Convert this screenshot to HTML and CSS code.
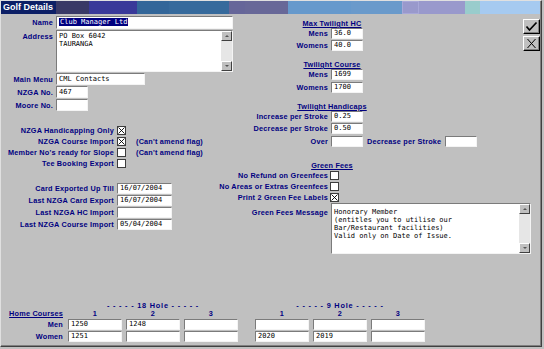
FILE: index.html
```html
<!DOCTYPE html>
<html lang="en">
<head>
    <meta charset="UTF-8">
    <meta name="viewport" content="width=device-width, initial-scale=1.0">
    <title>Golf Details</title>
    <link rel="stylesheet" href="styles.css">
</head>
<body>
    <div id="window">
        <div id="title-bar">
            <div id="title">Golf Details</div>
            <div class="seg seg-1"></div>
            <div class="seg seg-2"></div>
            <div class="seg seg-3"></div>
            <div class="seg seg-4"></div>
            <div class="seg seg-5"></div>
            <div class="seg seg-6"></div>
            <div class="seg seg-7"></div>
            <div class="seg seg-8"></div>
            <div class="seg seg-9"></div>
            <div class="seg seg-10"></div>
            <div class="seg seg-11"></div>
            <div class="seg seg-12"></div>
        </div>

        <div id="main">
            <div id="left-col">
                <div class="row">
                    <div class="lbl lbl-a">Name</div>
                    <div class="field w-177 h-13"><span class="selected">Club Manager Ltd</span></div>
                </div>
                <div class="row row-top mt-1">
                    <div class="lbl lbl-a lbl-memo">Address</div>
                    <div class="memo w-177 h-42">
                        <div class="memo-text addr-text">PO Box 6042<br>TAURANGA</div>
                        <div class="scroll">
                            <div class="sb-btn"><span class="arrow-up"></span></div>
                            <div class="sb-track"></div>
                            <div class="sb-btn"><span class="arrow-down"></span></div>
                        </div>
                    </div>
                </div>
                <div class="row mt-1">
                    <div class="lbl lbl-a">Main Menu</div>
                    <div class="field w-89 h-12">CML Contacts</div>
                </div>
                <div class="row mt-1">
                    <div class="lbl lbl-a">NZGA No.</div>
                    <div class="field w-32 h-12">467</div>
                </div>
                <div class="row mt-1">
                    <div class="lbl lbl-a">Moore No.</div>
                    <div class="field w-32 h-12"></div>
                </div>

                <div id="flags">
                    <div class="row check-row">
                        <div class="lbl lbl-b">NZGA Handicapping Only</div>
                        <div class="cb"><svg width="7" height="7" viewBox="0 0 7 7"><path d="M0.5 0.5L6.5 6.5M6.5 0.5L0.5 6.5" stroke="#000" stroke-width="0.9"/></svg></div>
                    </div>
                    <div class="row check-row">
                        <div class="lbl lbl-b">NZGA Course Import</div>
                        <div class="cb"><svg width="7" height="7" viewBox="0 0 7 7"><path d="M0.5 0.5L6.5 6.5M6.5 0.5L0.5 6.5" stroke="#000" stroke-width="0.9"/></svg></div>
                        <div class="note">(Can't amend flag)</div>
                    </div>
                    <div class="row check-row">
                        <div class="lbl lbl-b">Member No's ready for Slope</div>
                        <div class="cb"></div>
                        <div class="note">(Can't amend flag)</div>
                    </div>
                    <div class="row check-row">
                        <div class="lbl lbl-b">Tee Booking Export</div>
                        <div class="cb"></div>
                    </div>
                </div>

                <div id="dates">
                    <div class="row">
                        <div class="lbl lbl-b">Card Exported Up Till</div>
                        <div class="field w-55 h-11">16/07/2004</div>
                    </div>
                    <div class="row mt-1">
                        <div class="lbl lbl-b">Last NZGA Card Export</div>
                        <div class="field w-55 h-11">16/07/2004</div>
                    </div>
                    <div class="row mt-1">
                        <div class="lbl lbl-b">Last NZGA HC Import</div>
                        <div class="field w-55 h-11"></div>
                    </div>
                    <div class="row mt-1">
                        <div class="lbl lbl-b">Last NZGA Course Import</div>
                        <div class="field w-55 h-11">05/04/2004</div>
                    </div>
                </div>
            </div>

            <div id="right-col">
                <div id="twilight-top">
                    <div class="group">
                        <div class="heading">Max Twilight HC</div>
                        <div class="row">
                            <div class="lbl lbl-c">Mens</div>
                            <div class="field w-32 h-11">36.0</div>
                        </div>
                        <div class="row mt-1">
                            <div class="lbl lbl-c">Womens</div>
                            <div class="field w-32 h-11">40.0</div>
                        </div>
                    </div>
                    <div id="buttons">
                        <div class="btn">
                            <svg width="13" height="11" viewBox="0 0 13 11"><path d="M1.5 5.5L4.5 9L11.5 1.5" fill="none" stroke="#000" stroke-width="1.7"/></svg>
                        </div>
                        <div class="btn">
                            <svg width="11" height="11" viewBox="0 0 11 11"><path d="M1.5 1L9.5 10M9.5 1L1.5 10" stroke="#000" stroke-width="1"/></svg>
                        </div>
                    </div>
                </div>

                <div class="heading mt-7">Twilight Course</div>
                <div class="row">
                    <div class="lbl lbl-c">Mens</div>
                    <div class="field w-32 h-11">1699</div>
                </div>
                <div class="row mt-2">
                    <div class="lbl lbl-c">Womens</div>
                    <div class="field w-32 h-11">1700</div>
                </div>

                <div class="heading mt-9">Twilight Handicaps</div>
                <div class="row">
                    <div class="lbl lbl-c">Increase per Stroke</div>
                    <div class="field w-32 h-11">0.25</div>
                </div>
                <div class="row mt-1">
                    <div class="lbl lbl-c">Decrease per Stroke</div>
                    <div class="field w-32 h-11">0.50</div>
                </div>
                <div class="row mt-2">
                    <div class="lbl lbl-c">Over</div>
                    <div class="field w-32 h-11"></div>
                    <div class="lbl lbl-inline">Decrease per Stroke</div>
                    <div class="field w-32 h-11"></div>
                </div>

                <div class="heading mt-14">Green Fees</div>
                <div class="row check-row">
                    <div class="lbl lbl-c lbl-cb">No Refund on Greenfees</div>
                    <div class="cb"></div>
                </div>
                <div class="row check-row">
                    <div class="lbl lbl-c lbl-cb">No Areas or Extras Greenfees</div>
                    <div class="cb"></div>
                </div>
                <div class="row check-row">
                    <div class="lbl lbl-c lbl-cb">Print 2 Green Fee Labels</div>
                    <div class="cb"><svg width="7" height="7" viewBox="0 0 7 7"><path d="M0.5 0.5L6.5 6.5M6.5 0.5L0.5 6.5" stroke="#000" stroke-width="0.9"/></svg></div>
                </div>
                <div class="row row-top">
                    <div class="lbl lbl-c lbl-msg">Green Fees Message</div>
                    <div class="memo w-200 h-51">
                        <div class="memo-text msg-text">Honorary Member<br>(entitles you to utilise our<br>Bar/Restaurant facilities)<br>Valid only on Date of Issue.</div>
                        <div class="scroll">
                            <div class="sb-btn"><span class="arrow-up"></span></div>
                            <div class="sb-track"></div>
                            <div class="sb-btn"><span class="arrow-down"></span></div>
                        </div>
                    </div>
                </div>
            </div>
        </div>

        <div id="courses">
            <div></div>
            <div class="set-title span-3">- - - - - 18 Hole - - - - -</div>
            <div></div>
            <div class="set-title span-3">- - - - - 9 Hole - - - - -</div>

            <div class="lbl home">Home Courses</div>
            <div class="col-num">1</div>
            <div class="col-num">2</div>
            <div class="col-num">3</div>
            <div></div>
            <div class="col-num">1</div>
            <div class="col-num">2</div>
            <div class="col-num">3</div>

            <div class="lbl course-lbl">Men</div>
            <div class="field h-11">1250</div>
            <div class="field h-11">1248</div>
            <div class="field h-11"></div>
            <div></div>
            <div class="field h-11"></div>
            <div class="field h-11"></div>
            <div class="field h-11"></div>

            <div class="lbl course-lbl">Women</div>
            <div class="field h-11">1251</div>
            <div class="field h-11"></div>
            <div class="field h-11"></div>
            <div></div>
            <div class="field h-11">2020</div>
            <div class="field h-11">2019</div>
            <div class="field h-11"></div>
        </div>
    </div>
</body>
</html>
```

FILE: styles.css
```css
* {
    box-sizing: border-box;
}
html, body {
    margin: 0;
    padding: 0;
    background-color: #c0c0c0;
}
body {
    font-family: "Liberation Sans", Arial, sans-serif;
    font-size: 7.3px;
    font-weight: bold;
    line-height: 9px;
    letter-spacing: 0.2px;
    color: #000080;
}
#window {
    width: 542px;
    height: 347px;
    border-top: 1px solid #e0e0e0;
    border-left: 1px solid #e0e0e0;
    border-right: 1px solid #404040;
    border-bottom: 1px solid #404040;
    box-shadow: inset -1px -1px 0 #808080;
    display: flex;
    flex-direction: column;
}

/* title bar */
#title-bar {
    height: 13px;
    display: flex;
    margin-right: 1px;
}
#title {
    width: 55px;
    padding-left: 2px;
    background-color: #0c1f66;
    color: #fff;
    font-size: 9px;
    line-height: 13px;
    letter-spacing: 0;
    white-space: nowrap;
}
.seg { flex: none; }
.seg-1 { width: 33px; background-color: #393966; }
.seg-2 { width: 48px; background-color: #393999; }
.seg-3 { width: 32px; background-color: #336699; }
.seg-4 { width: 60px; background-color: #366a9c; }
.seg-5 { width: 16px; background-color: #666699; }
.seg-6 { width: 43px; background-color: #686898; }
.seg-7 { width: 63px; background-color: #6699cc; }
.seg-8 { width: 51px; background-color: #6a9acb; }
.seg-9 { width: 17px; background-color: #9999cc; box-shadow: inset 0 0 0 1px #a8a8d8; }
.seg-10 { width: 46px; background-color: #9999cc; }
.seg-11 { width: 15px; background-color: #99cccc; }
.seg-12 { flex: 1; background-color: #a6caf0; }

/* layout */
#main {
    display: flex;
}
#left-col {
    width: 212px;
    padding-top: 2px;
}
#right-col {
    flex: 1;
}
.row {
    display: flex;
    align-items: center;
}
.row-top {
    align-items: flex-start;
}
.mt-1 { margin-top: 1px; }
.mt-2 { margin-top: 2px; }
.mt-7 { margin-top: 7px; }
.mt-9 { margin-top: 9px; }
.mt-14 { margin-top: 14px; }

/* labels */
.lbl {
    flex: none;
    text-align: right;
    white-space: nowrap;
}
.lbl-a { width: 52px; margin-right: 3px; }
.lbl-b { width: 113px; margin-right: 3px; }
.lbl-c { width: 115px; margin-right: 3px; }
.lbl-cb { margin-right: 2px; }
.lbl-memo { margin-top: 2px; }
.lbl-msg { margin-top: 5px; }
.lbl-inline { margin: 0 4px 0 4px; }
.note {
    margin-left: 10px;
    white-space: nowrap;
}
.heading {
    width: 238px;
    height: 9px;
    text-align: center;
    text-decoration: underline;
    white-space: nowrap;
}

/* edit boxes */
.field, .memo {
    background-color: #fff;
    border: 1px solid;
    border-color: #7b7b7b #f4f4f4 #f4f4f4 #7b7b7b;
    font-family: "DejaVu Sans Mono", monospace;
    font-weight: normal;
    font-size: 7px;
    letter-spacing: 0;
    color: #000;
}
.field {
    flex: none;
    padding-left: 2px;
    white-space: nowrap;
    overflow: hidden;
}
.h-11 { height: 11px; line-height: 9px; }
.h-12 { height: 12px; line-height: 10px; }
.h-13 { height: 13px; line-height: 11px; }
.h-42 { height: 42px; }
.h-51 { height: 51px; }
.w-32 { width: 32px; }
.w-55 { width: 55px; }
.w-89 { width: 89px; }
.w-177 { width: 177px; }
.w-200 { width: 200px; }
.selected {
    background-color: #000080;
    color: #fff;
    padding: 0 1px;
}
.memo {
    display: flex;
    flex: none;
}
.memo-text {
    flex: 1;
    padding-left: 2px;
    line-height: 8px;
    white-space: nowrap;
}
.addr-text { padding-top: 1px; }
.msg-text { padding-top: 4px; }
.scroll {
    width: 11px;
    display: flex;
    flex-direction: column;
    background-color: #e6e6e6;
}
.sb-btn {
    height: 10px;
    background-color: #c0c0c0;
    border: 1px solid;
    border-color: #fff #404040 #404040 #fff;
    display: flex;
    justify-content: center;
    align-items: center;
}
.sb-track { flex: 1; }
.arrow-up {
    border-left: 2px solid transparent;
    border-right: 2px solid transparent;
    border-bottom: 2px solid #555;
}
.arrow-down {
    border-left: 2px solid transparent;
    border-right: 2px solid transparent;
    border-top: 2px solid #555;
}

/* check boxes */
#flags {
    margin-top: 14px;
}
#dates {
    margin-top: 14px;
}
.check-row {
    height: 11px;
}
.cb {
    flex: none;
    width: 9px;
    height: 9px;
    background-color: #fff;
    border: 1px solid #3c3c3c;
    display: flex;
}

/* ok / cancel */
#twilight-top {
    display: flex;
    justify-content: space-between;
    padding-top: 5px;
}
#buttons {
    margin-right: 1px;
}
.btn {
    width: 17px;
    height: 15px;
    margin-bottom: 2px;
    background-color: #c0c0c0;
    border: 1px solid;
    border-color: #fff #000 #000 #fff;
    box-shadow: inset -1px -1px 0 #808080;
    display: flex;
    justify-content: center;
    align-items: center;
}

/* home courses */
#courses {
    margin-top: 48px;
    display: grid;
    grid-template-columns: 63px 54px 54px 54px 9px 54px 54px 54px;
    grid-template-rows: 7px 10px 12px 12px;
    column-gap: 4px;
}
.span-3 {
    grid-column: span 3;
}
.set-title {
    text-align: center;
    line-height: 7px;
    letter-spacing: 0.8px;
    white-space: nowrap;
}
.col-num {
    text-align: center;
}
.home {
    text-decoration: underline;
    padding-right: 1px;
}
.course-lbl {
    padding-right: 1px;
    line-height: 11px;
}
#courses .field {
    width: 54px;
}
```
